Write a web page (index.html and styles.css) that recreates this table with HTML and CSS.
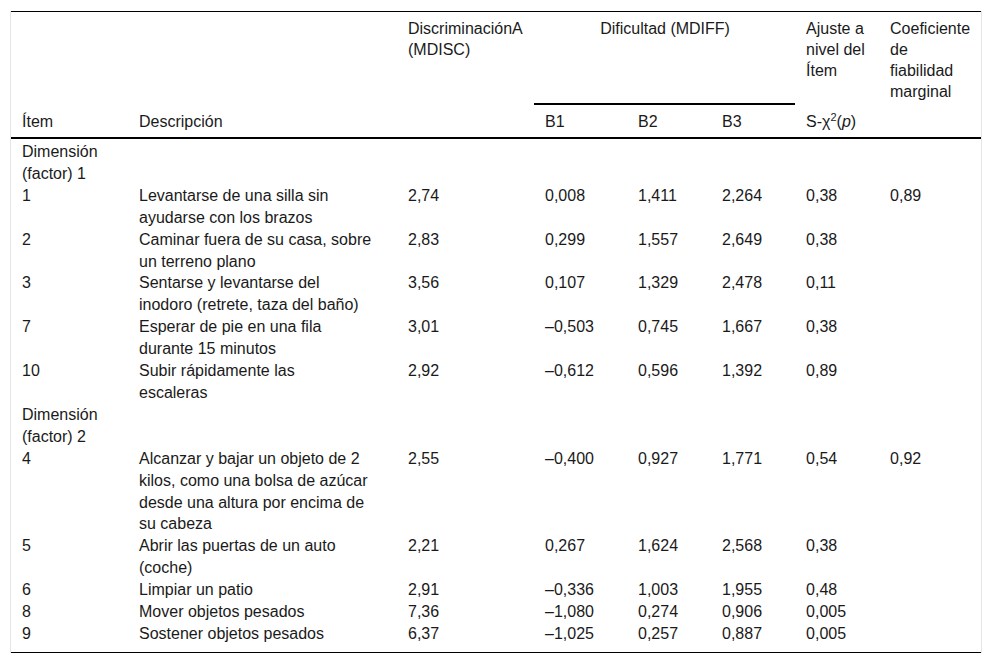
FILE: index.html
```html
<!DOCTYPE html>
<html lang="es">
<head>
<meta charset="utf-8">
<title>Tabla</title>
<link rel="stylesheet" href="styles.css">
</head>
<body>
<div class="wrap">
<table class="tbl">
  <colgroup>
    <col class="c1"><col class="c2"><col class="c3"><col class="c4"><col class="c5"><col class="c6"><col class="c7"><col class="c8">
  </colgroup>
  <thead>
    <tr class="h1">
      <th rowspan="2" class="bot">Ítem</th>
      <th rowspan="2" class="bot">Descripción</th>
      <th rowspan="2" class="topv">DiscriminaciónA (MDISC)</th>
      <th colspan="3" class="center rule">Dificultad (MDIFF)</th>
      <th class="topv">Ajuste a nivel del Ítem</th>
      <th class="topv">Coeficiente de fiabilidad marginal</th>
    </tr>
    <tr class="h2">
      <th>B1</th>
      <th>B2</th>
      <th>B3</th>
      <th>S-χ<sup>2</sup>(<i>p</i>)</th>
      <th></th>
    </tr>
  </thead>
  <tbody>
    <tr class="first"><td>Dimensión (factor) 1</td><td></td><td></td><td></td><td></td><td></td><td></td><td></td></tr>
    <tr><td>1</td><td class="desc">Levantarse de una silla sin<br>ayudarse con los brazos</td><td>2,74</td><td>0,008</td><td>1,411</td><td>2,264</td><td>0,38</td><td>0,89</td></tr>
    <tr><td>2</td><td class="desc">Caminar fuera de su casa, sobre<br>un terreno plano</td><td>2,83</td><td>0,299</td><td>1,557</td><td>2,649</td><td>0,38</td><td></td></tr>
    <tr><td>3</td><td class="desc">Sentarse y levantarse del<br>inodoro (retrete, taza del baño)</td><td>3,56</td><td>0,107</td><td>1,329</td><td>2,478</td><td>0,11</td><td></td></tr>
    <tr><td>7</td><td class="desc">Esperar de pie en una fila<br>durante 15 minutos</td><td>3,01</td><td>–0,503</td><td>0,745</td><td>1,667</td><td>0,38</td><td></td></tr>
    <tr><td>10</td><td class="desc">Subir rápidamente las<br>escaleras</td><td>2,92</td><td>–0,612</td><td>0,596</td><td>1,392</td><td>0,89</td><td></td></tr>
    <tr><td>Dimensión (factor) 2</td><td></td><td></td><td></td><td></td><td></td><td></td><td></td></tr>
    <tr><td>4</td><td class="desc">Alcanzar y bajar un objeto de 2<br>kilos, como una bolsa de azúcar<br>desde una altura por encima de<br>su cabeza</td><td>2,55</td><td>–0,400</td><td>0,927</td><td>1,771</td><td>0,54</td><td>0,92</td></tr>
    <tr><td>5</td><td class="desc">Abrir las puertas de un auto<br>(coche)</td><td>2,21</td><td>0,267</td><td>1,624</td><td>2,568</td><td>0,38</td><td></td></tr>
    <tr><td>6</td><td class="desc">Limpiar un patio</td><td>2,91</td><td>–0,336</td><td>1,003</td><td>1,955</td><td>0,48</td><td></td></tr>
    <tr><td>8</td><td class="desc">Mover objetos pesados</td><td>7,36</td><td>–1,080</td><td>0,274</td><td>0,906</td><td>0,005</td><td></td></tr>
    <tr class="last"><td>9</td><td class="desc">Sostener objetos pesados</td><td>6,37</td><td>–1,025</td><td>0,257</td><td>0,887</td><td>0,005</td><td></td></tr>
  </tbody>
</table>
</div>
</body>
</html>
```
FILE: styles.css
```css
html, body {
  margin: 0;
  padding: 0;
  background: #fff;
}
body {
  font-family: "Liberation Sans", Arial, sans-serif;
  font-size: 16px;
  color: #1a1a1a;
}
.wrap {
  margin: 11px 0 0 10px;
  width: 970px;
  border-left: 1px solid #e6e6e6;
  border-right: 1px solid #e6e6e6;
}
.tbl {
  width: 970px;
  table-layout: fixed;
  border-collapse: separate;
  border-spacing: 0;
  border-top: 1px solid #000;
  border-bottom: 1px solid #000;
}
.c1 { width: 117px; }
.c2 { width: 269px; }
.c3 { width: 137px; }
.c4 { width: 93px; }
.c5 { width: 84px; }
.c6 { width: 84px; }
.c7 { width: 84px; }
.c8 { width: 102px; }

.tbl th {
  font-weight: normal;
  text-align: left;
  vertical-align: top;
  line-height: 21px;
  padding: 6px 10px 0 11px;
}
.tbl th.center { text-align: center; }
.tbl th.bot {
  vertical-align: bottom;
  padding-bottom: 5px;
  border-bottom: 2px solid #000;
}
.tbl th.topv[rowspan] { border-bottom: 2px solid #000; }
.tbl .h1 th.rule { border-bottom: 2px solid #000; }
.tbl .h1 th:last-child { padding-bottom: 3px; }
.tbl .h2 th {
  padding-top: 6px;
  padding-bottom: 5px;
  border-bottom: 2px solid #000;
}
.tbl sup {
  font-size: 11px;
  line-height: 0;
  vertical-align: 6px;
}
.tbl td {
  vertical-align: top;
  line-height: 21.9px;
  padding: 0 10px 0 11px;
}
.tbl td.desc { white-space: nowrap; }
.tbl .first td { padding-top: 2px; }
.tbl .last td { padding-bottom: 7px; }
```
